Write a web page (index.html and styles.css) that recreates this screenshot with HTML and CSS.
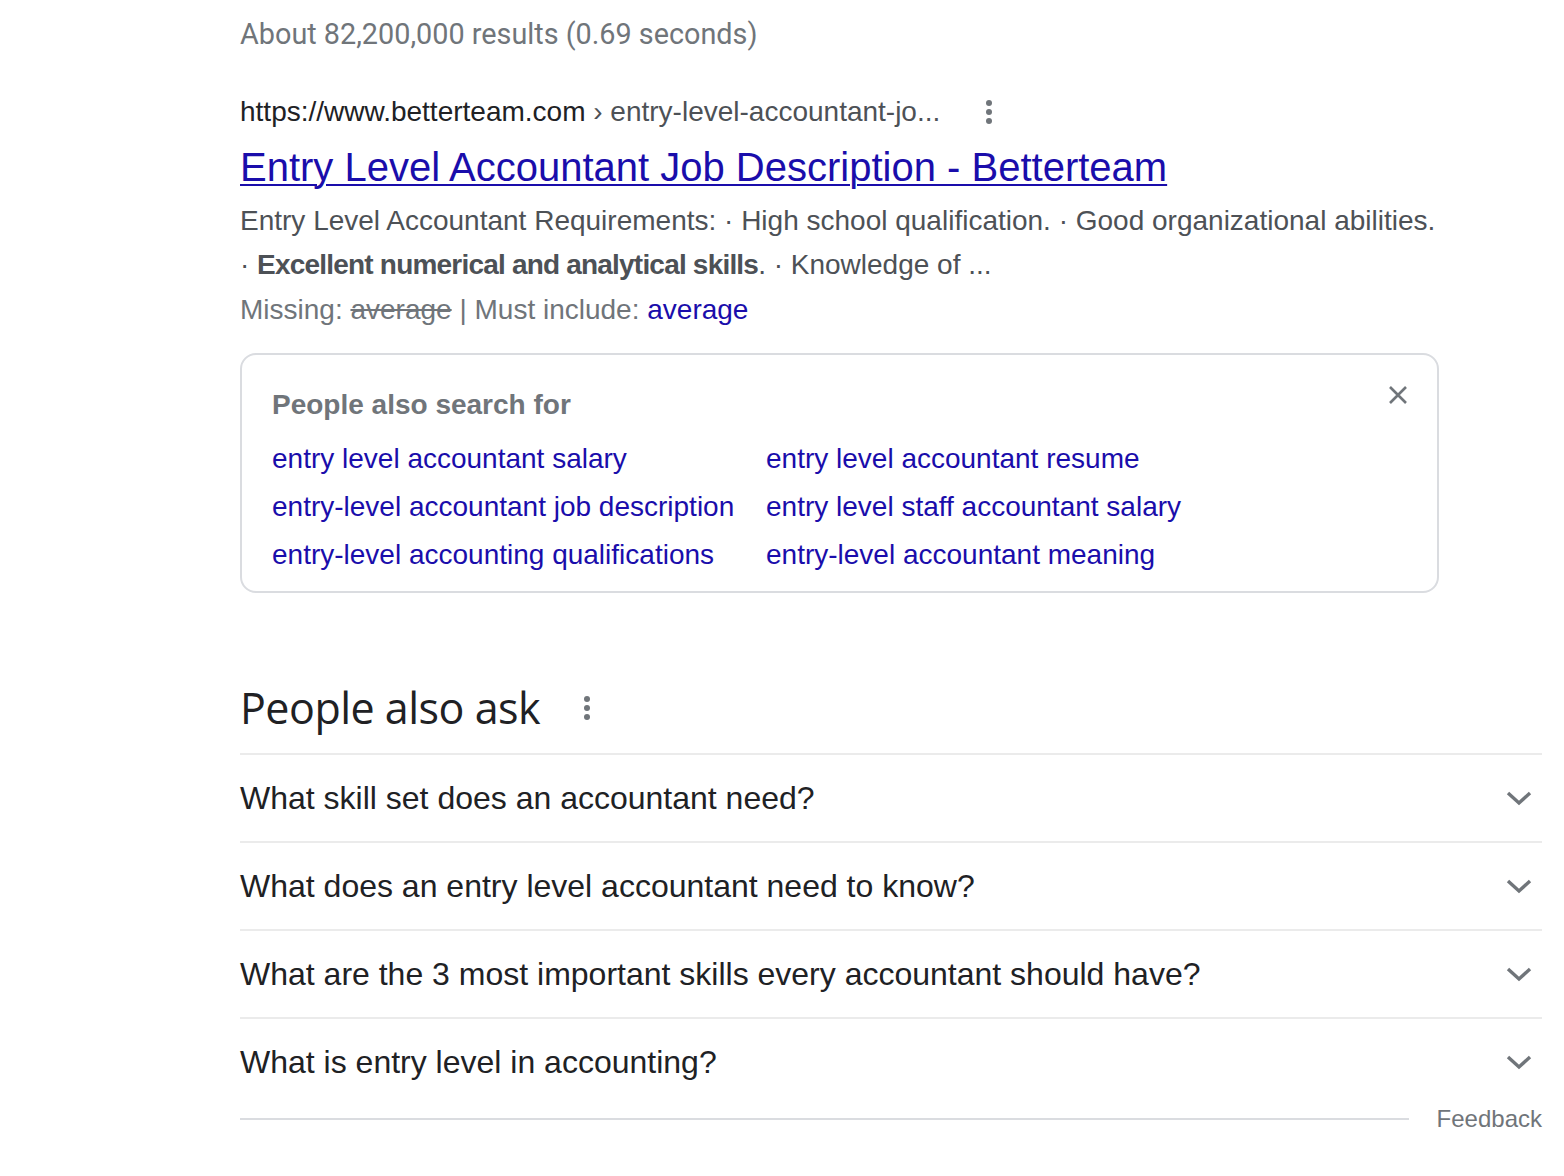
FILE: index.html
```html
<!DOCTYPE html>
<html>
<head>
<meta charset="utf-8">
<link rel="stylesheet" href="styles.css">
</head>
<body>
<div class="page">
  <div class="stats">About 82,200,000 results (0.69 seconds)</div>

  <div class="result">
    <div class="cite-row">
      <cite class="cite">https://www.betterteam.com <span class="crumb">› entry-level-accountant-jo...</span></cite>
      <span class="kebab small"><i></i><i></i><i></i></span>
    </div>
    <a class="title" href="#">Entry Level Accountant Job Description - Betterteam</a>
    <div class="snippet">Entry Level Accountant Requirements: · High school qualification. · Good organizational abilities. · <b>Excellent numerical and analytical skills</b>. · Knowledge of ...</div>
    <div class="missing">Missing: <s>average</s> | Must include: <a href="#">average</a></div>
  </div>

  <div class="pasf">
    <div class="pasf-head">People also search for</div>
    <svg class="close" width="24" height="24" viewBox="0 0 24 24"><path d="M4 4L20 20M20 4L4 20" stroke="#70757a" stroke-width="2.6" fill="none"/></svg>
    <div class="pasf-grid">
      <a href="#">entry level accountant salary</a>
      <a href="#">entry level accountant resume</a>
      <a href="#">entry-level accountant job description</a>
      <a href="#">entry level staff accountant salary</a>
      <a href="#">entry-level accounting qualifications</a>
      <a href="#">entry-level accountant meaning</a>
    </div>
  </div>

  <div class="paa">
    <div class="paa-head">
      <h2>People also ask</h2>
      <span class="kebab"><i></i><i></i><i></i></span>
    </div>
    <div class="q"><span>What skill set does an accountant need?</span><svg class="chev" width="26" height="16" viewBox="0 0 26 16"><path d="M2 3L13 13L24 3" stroke="#70757a" stroke-width="3.4" fill="none"/></svg></div>
    <div class="q"><span>What does an entry level accountant need to know?</span><svg class="chev" width="26" height="16" viewBox="0 0 26 16"><path d="M2 3L13 13L24 3" stroke="#70757a" stroke-width="3.4" fill="none"/></svg></div>
    <div class="q"><span>What are the 3 most important skills every accountant should have?</span><svg class="chev" width="26" height="16" viewBox="0 0 26 16"><path d="M2 3L13 13L24 3" stroke="#70757a" stroke-width="3.4" fill="none"/></svg></div>
    <div class="q last"><span>What is entry level in accounting?</span><svg class="chev" width="26" height="16" viewBox="0 0 26 16"><path d="M2 3L13 13L24 3" stroke="#70757a" stroke-width="3.4" fill="none"/></svg></div>
    <div class="feedback-row">
      <div class="fb-line"></div>
      <span class="feedback">Feedback</span>
    </div>
  </div>
</div>
</body>
</html>
```

FILE: styles.css
```css
html, body {
  margin: 0;
  padding: 0;
  background: #fff;
}
body {
  font-family: "Liberation Sans", Arial, sans-serif;
  color: #202124;
}
.page {
  padding: 12px 22px 0 240px;
}
.stats {
  font-family: Roboto, "Liberation Sans", Arial, sans-serif;
  font-size: 28.8px;
  line-height: 44px;
  color: #70757a;
}
.result {
  margin-top: 34px;
  width: 1200px;
}
.cite-row {
  display: flex;
  align-items: center;
  height: 44px;
}
.cite {
  font-style: normal;
  font-size: 28px;
  color: #202124;
  line-height: 44px;
}
.crumb {
  color: #4d5156;
}
.kebab {
  display: inline-flex;
  flex-direction: column;
  gap: 3px;
  margin-left: 46px;
}
.kebab i {
  display: block;
  width: 6px;
  height: 6px;
  border-radius: 50%;
  background: #70757a;
}
.title {
  display: inline-block;
  font-size: 40px;
  line-height: 52px;
  margin-top: 7px;
  color: #1a0dab;
  text-decoration: underline;
  text-decoration-thickness: 2px;
  text-underline-offset: 3px;
}
.snippet {
  font-size: 28px;
  line-height: 44px;
  color: #4d5156;
  margin-top: 6px;
}
.snippet b {
  font-weight: bold;
  letter-spacing: -0.8px;
}
.missing {
  font-size: 28px;
  line-height: 46px;
  color: #70757a;
}
.missing a {
  color: #1a0dab;
  text-decoration: none;
}
.pasf {
  position: relative;
  width: 1199px;
  box-sizing: border-box;
  margin-top: 20px;
  border: 2px solid #dadce0;
  border-radius: 16px;
  padding: 30px 30px 12px 30px;
}
.pasf-head {
  font-size: 28px;
  font-weight: bold;
  color: #70757a;
  line-height: 40px;
}
.close {
  position: absolute;
  top: 28px;
  right: 27px;
}
.pasf-grid {
  display: grid;
  grid-template-columns: 494px auto;
  margin-top: 10px;
}
.pasf-grid a {
  font-size: 28px;
  line-height: 48px;
  color: #1a0dab;
  text-decoration: none;
  white-space: nowrap;
}
.paa {
  margin-top: 85px;
}
.paa-head {
  display: flex;
  align-items: center;
  height: 60px;
}
.paa-head h2 {
  margin: 0;
  font-family: "Open Sans", Roboto, sans-serif;
  font-weight: normal;
  font-size: 43px;
  line-height: 60px;
  color: #202124;
  letter-spacing: -0.5px;
}
.paa-head .kebab {
  margin-left: 44px;
}
.q {
  display: flex;
  align-items: center;
  justify-content: space-between;
  height: 86px;
  border-top: 2px solid #ebebeb;
  font-size: 32px;
  color: #202124;
}
.paa-head + .q {
  margin-top: 15px;
}
.chev {
  margin-right: 10px;
}
.feedback-row {
  display: flex;
  align-items: center;
  margin-top: 2px;
  height: 24px;
}
.fb-line {
  width: 1170px;
  height: 2px;
  background: #dadce0;
}
.feedback {
  margin-left: 28px;
  font-size: 24px;
  color: #70757a;
}
```
